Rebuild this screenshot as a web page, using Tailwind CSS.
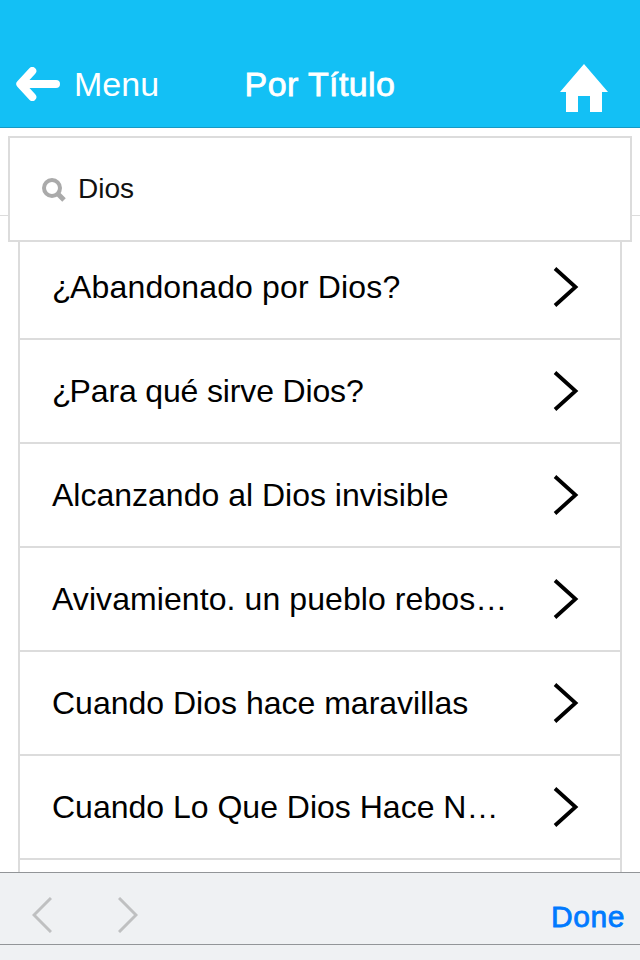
<!DOCTYPE html>
<html lang="es">
<head>
<meta charset="utf-8">
<title>Por Título</title>
<script src="https://cdn.jsdelivr.net/npm/@tailwindcss/browser@4"></script>
</head>
<body class="bg-white">
<div class="relative flex h-[960px] w-[640px] flex-col overflow-hidden bg-white font-['Liberation_Sans',Arial,sans-serif] text-black">
  <header class="grid h-32 shrink-0 grid-cols-3 items-start border-b border-[#1799c4] bg-[#13c0f5] pt-16 text-white">
    <a class="flex h-10 items-center pl-4">
      <svg class="h-[34px] w-11" viewBox="0 0 44 34" fill="none" stroke="currentColor" stroke-width="8" stroke-linecap="round" stroke-linejoin="round"><path d="M16.300 4 4.300 17l12 13M5 17h35"/></svg>
      <span class="pl-3.5 text-[34px] leading-10">Menu</span>
    </a>
    <h1 class="text-center text-[34px] leading-10 tracking-[0.4px] whitespace-nowrap [-webkit-text-stroke:0.8px_white]">Por Título</h1>
    <a class="flex justify-end pr-8">
      <svg class="h-12 w-12" viewBox="0 0 48 48" fill="currentColor"><path d="M24 0 48 28H42V48H30V32H18V48H6V28H0Z"/></svg>
    </a>
  </header>
  <main class="min-h-0 flex-1 overflow-hidden pt-2">
    <div class="absolute top-[215px] left-0 h-px w-full bg-[#dcdcdc]"></div>
    <div class="relative z-10 mx-2 flex h-[106px] items-center border-2 border-[#dcdcdc] bg-white pl-8">
      <svg class="mt-0.5 h-6 w-6" viewBox="0 0 24 24" fill="none" stroke="#aaaaaa"><circle cx="10" cy="10" r="8" stroke-width="4"/><path d="m15 15 7 7" stroke-width="5"/></svg>
      <span class="pl-3 text-[28px] leading-8 text-[#111]">Dios</span>
    </div>
    <ul class="relative -mt-1.5 mx-[18px] border-x-2 border-[#dcdcdc] bg-white text-[32px]">
      <li class="flex h-[104px] items-center justify-between border-b-2 border-[#dcdcdc] pr-[41px] pl-8"><span class="tracking-[0.15px] whitespace-nowrap"><span class="-tracking-[1.5px]">¿</span>Abandonado por Dios?</span><svg class="h-10 w-[26px]" viewBox="0 0 26 40" fill="none" stroke="currentColor" stroke-width="3.8"><path d="m2 1.500 20.500 18.500L2 38.500"/></svg></li>
      <li class="flex h-[104px] items-center justify-between border-b-2 border-[#dcdcdc] pr-[41px] pl-8"><span class="-tracking-[0.15px] whitespace-nowrap"><span class="-tracking-[2px]">¿</span>Para qué sirve Dios?</span><svg class="h-10 w-[26px]" viewBox="0 0 26 40" fill="none" stroke="currentColor" stroke-width="3.8"><path d="m2 1.500 20.500 18.500L2 38.500"/></svg></li>
      <li class="flex h-[104px] items-center justify-between border-b-2 border-[#dcdcdc] pr-[41px] pl-8"><span class="whitespace-nowrap">Alcanzando al Dios invisible</span><svg class="h-10 w-[26px]" viewBox="0 0 26 40" fill="none" stroke="currentColor" stroke-width="3.8"><path d="m2 1.500 20.500 18.500L2 38.500"/></svg></li>
      <li class="flex h-[104px] items-center justify-between border-b-2 border-[#dcdcdc] pr-[41px] pl-8"><span class="tracking-[0.08px] whitespace-nowrap">Avivamiento. un pueblo rebos…</span><svg class="h-10 w-[26px]" viewBox="0 0 26 40" fill="none" stroke="currentColor" stroke-width="3.8"><path d="m2 1.500 20.500 18.500L2 38.500"/></svg></li>
      <li class="flex h-[104px] items-center justify-between border-b-2 border-[#dcdcdc] pr-[41px] pl-8"><span class="whitespace-nowrap">Cuando Dios hace maravillas</span><svg class="h-10 w-[26px]" viewBox="0 0 26 40" fill="none" stroke="currentColor" stroke-width="3.8"><path d="m2 1.500 20.500 18.500L2 38.500"/></svg></li>
      <li class="flex h-[104px] items-center justify-between border-b-2 border-[#dcdcdc] pr-[41px] pl-8"><span class="whitespace-nowrap">Cuando Lo Que Dios Hace N…</span><svg class="h-10 w-[26px]" viewBox="0 0 26 40" fill="none" stroke="currentColor" stroke-width="3.8"><path d="m2 1.500 20.500 18.500L2 38.500"/></svg></li>
      <li class="h-[104px]"></li>
    </ul>
  </main>
  <footer class="relative h-[88px] shrink-0 border-t border-[#929598] bg-[#eff1f3]">
    <div class="flex h-[72px] items-start justify-between border-b border-[#929598] pt-6 pr-4 pl-8">
      <div class="flex gap-[66px] text-[#bfc0c1]">
        <svg class="h-9 w-5" viewBox="0 0 20 36" fill="none" stroke="currentColor" stroke-width="3"><path d="M19 1 2 18l17 17"/></svg>
        <svg class="h-9 w-5" viewBox="0 0 20 36" fill="none" stroke="currentColor" stroke-width="3"><path d="m1 1 17 17L1 35"/></svg>
      </div>
      <span class="-mr-px text-[30px] leading-10 tracking-[0.6px] text-[#007aff] [-webkit-text-stroke:0.8px_#007aff]">Done</span>
    </div>
  </footer>
</div>
</body>
</html>
